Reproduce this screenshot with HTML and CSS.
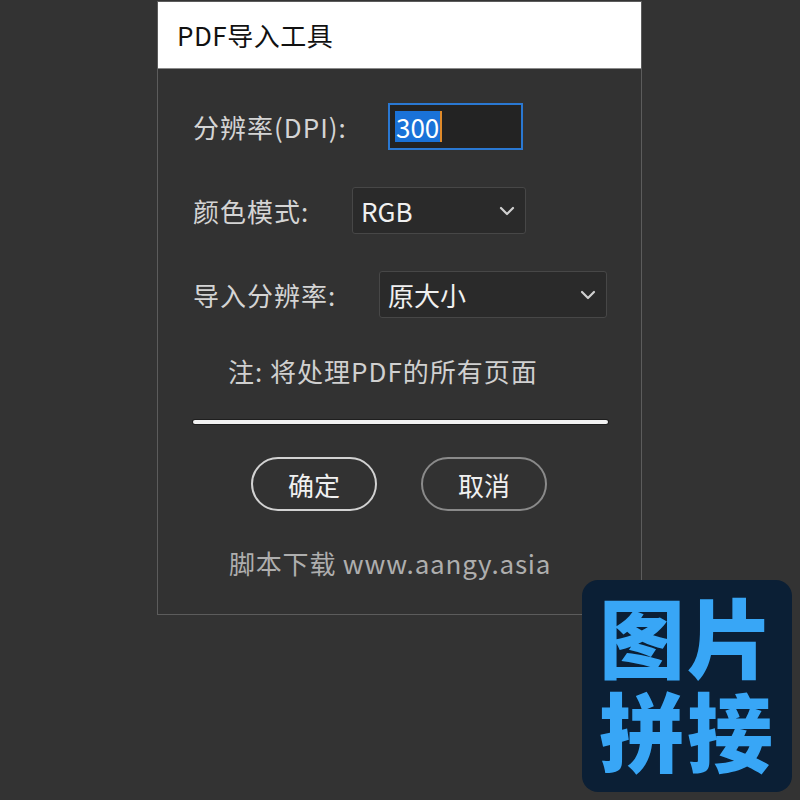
FILE: index.html
```html
<!DOCTYPE html>
<html lang="zh-CN">
<head>
<meta charset="utf-8">
<title>PDF导入工具</title>
<link rel="stylesheet" href="styles.css">
</head>
<body>
<div class="dialog">
  <div class="titlebar">PDF导入工具</div>
  <div class="content">
    <div class="row row-dpi">
      <span class="label">分辨率(DPI):</span>
      <div class="input"><span class="sel">300</span><span class="caret"></span></div>
    </div>
    <div class="row row-mode">
      <span class="label">颜色模式:</span>
      <div class="select select-mode"><span>RGB</span>
        <svg class="chev" width="16" height="10" viewBox="0 0 16 10"><path d="M2 2 L8 8 L14 2" fill="none" stroke="#d0d0d0" stroke-width="2.2" stroke-linecap="round" stroke-linejoin="round"/></svg>
      </div>
    </div>
    <div class="row row-res">
      <span class="label">导入分辨率:</span>
      <div class="select select-res"><span>原大小</span>
        <svg class="chev" width="16" height="10" viewBox="0 0 16 10"><path d="M2 2 L8 8 L14 2" fill="none" stroke="#d0d0d0" stroke-width="2.2" stroke-linecap="round" stroke-linejoin="round"/></svg>
      </div>
    </div>
    <div class="note">注: 将处理PDF的所有页面</div>
    <div class="sep"></div>
    <div class="buttons">
      <div class="btn btn-ok">确定</div>
      <div class="btn btn-cancel">取消</div>
    </div>
    <div class="footer">脚本下载 www.aangy.asia</div>
  </div>
</div>
<div class="logo">
  <div class="logo-text">图片<br>拼接</div>
</div>
</body>
</html>
```

FILE: styles.css
```css
html, body {
  margin: 0;
  padding: 0;
  background: #333333;
  width: 800px;
  height: 800px;
  overflow: hidden;
  font-family: "Noto Sans CJK SC", "Noto Sans", sans-serif;
}

.dialog {
  margin-left: 157px;
  margin-top: 1px;
  width: 483px;
  height: 612px;
  border: 1px solid #5c5c5c;
  background: #323232;
}

.titlebar {
  height: 66px;
  background: #ffffff;
  border-bottom: 1px solid #8a8a8a;
  color: #111;
  font-size: 26px;
  letter-spacing: 0.5px;
  line-height: 66px;
  padding-left: 19px;
}

.content {
  padding-left: 35px;
}

.row {
  display: flex;
  align-items: center;
  height: 47px;
  color: #d4d4d4;
  font-size: 26px;
  letter-spacing: 1px;
}

.row-dpi { margin-top: 34px; }
.row-mode { margin-top: 37px; }
.row-res { margin-top: 37px; }

.label {
  line-height: 47px;
}

.row-dpi .label { width: 195px; }
.row-mode .label { width: 159px; }
.row-res .label { width: 186px; }

.input {
  width: 126px;
  height: 43px;
  border: 2px solid #2a78d2;
  background: #232323;
  display: flex;
  align-items: center;
  padding-left: 5px;
}

.sel {
  background: #1a72d8;
  color: #ffffff;
  font-size: 26px;
  letter-spacing: 0;
  line-height: 31px;
  height: 31px;
  padding: 0 1px;
}

.caret {
  width: 2px;
  height: 31px;
  background: #e08a2a;
}

.select {
  height: 45px;
  border: 1px solid #474747;
  border-radius: 3px;
  background: #2a2a2a;
  display: flex;
  align-items: center;
  justify-content: space-between;
  padding: 0 10px 0 8px;
  color: #f0f0f0;
  font-size: 26px;
  letter-spacing: 0;
}

.select-mode { width: 154px; }
.select-res { width: 208px; }

.chev { display: block; }

.note {
  margin-top: 35px;
  margin-left: 35px;
  color: #d0d0d0;
  font-size: 26px;
  letter-spacing: 1px;
  line-height: 36px;
}

.sep {
  margin-top: 31px;
  width: 415px;
  height: 4px;
  background: #f2f2f2;
  border-radius: 2px;
  box-shadow: 0 0 0 1px #1e1e1e;
}

.buttons {
  display: flex;
  gap: 44px;
  margin-top: 33px;
  margin-left: 58px;
}

.btn {
  width: 122px;
  height: 50px;
  border-radius: 27px;
  color: #f0f0f0;
  font-size: 26px;
  display: flex;
  align-items: center;
  justify-content: center;
}

.btn-ok { border: 2px solid #d2d2d2; }
.btn-cancel { border: 2px solid #8a8a8a; }

.footer {
  margin-top: 34px;
  margin-left: 36px;
  color: #aeaeae;
  font-size: 26px;
  letter-spacing: 0.8px;
  line-height: 36px;
}

.logo {
  position: absolute;
  left: 582px;
  top: 580px;
  width: 210px;
  height: 212px;
  border-radius: 16px;
  background: #0b1f35;
  color: #38a6f6;
  display: flex;
  align-items: flex-start;
  justify-content: center;
}

.logo-text {
  margin-top: 8px;
  font-size: 86px;
  font-weight: 900;
  line-height: 94px;
  letter-spacing: 2px;
  text-align: center;
}
```
